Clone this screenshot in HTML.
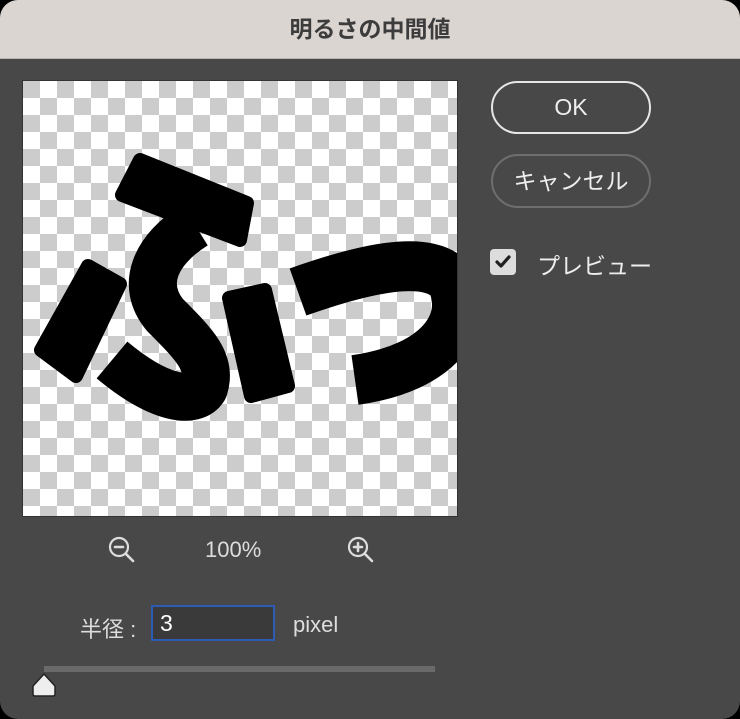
<!DOCTYPE html>
<html><head><meta charset="utf-8"><style>
body{margin:0;width:740px;height:719px;background:#000;overflow:hidden;font-family:"Liberation Sans","Noto Sans CJK JP",sans-serif}
.win{position:absolute;left:0;top:0;width:740px;height:719px;background:#484848;border-radius:18px;overflow:hidden}
.title{position:absolute;left:0;top:0;width:740px;height:58px;background:#dbd5d2;border-bottom:1px solid #b8b3b0;text-align:center;line-height:58px;font-size:23px;font-weight:bold;color:#3c3c3c}
.prev{position:absolute;left:23px;top:81px;width:434px;height:435px;background-color:#fff;
background-image:linear-gradient(45deg,#ccc 25%,transparent 25%,transparent 75%,#ccc 75%),linear-gradient(45deg,#ccc 25%,transparent 25%,transparent 75%,#ccc 75%);
background-size:34px 34px;background-position:17px 0,0 17px;overflow:hidden;outline:1px solid #333}
.btn{position:absolute;left:491px;width:156px;border-radius:27px;text-align:center;color:#eee;font-size:23px;box-sizing:border-box}
.t{position:absolute;color:#ddd;font-size:22px}
</style></head><body>
<div class="win">
<div class="title">明るさの中間値</div>
<div class="prev">
<svg width="434" height="435" viewBox="23 81 434 435" style="position:absolute;left:0;top:0">
<polygon points="140,160 247,203 240,240 122,195" fill="#000" stroke="#000" stroke-width="14" stroke-linejoin="round"/>
<path d="M195,225 C155,250 140,285 165,315 C195,345 212,362 204,388 C194,404 160,400 112,360" fill="none" stroke="#000" stroke-width="48" stroke-linejoin="round"/>
<polygon points="88,266 120,284 76,376 41,350" fill="#000" stroke="#000" stroke-width="14" stroke-linejoin="round"/>
<polygon points="229,298 265,290 288,386 251,396" fill="#000" stroke="#000" stroke-width="14" stroke-linejoin="round"/>
<path d="M298,292 C360,270 430,252 452,282 C470,322 440,368 355,380" fill="none" stroke="#000" stroke-width="50" stroke-linejoin="round"/>
</svg>
</div>
<div class="btn" style="top:81px;height:53px;line-height:49px;border:2px solid #e6e6e6;width:160px">OK</div>
<div class="btn" style="top:154px;height:54px;line-height:50px;border:2px solid #6e6e6e;width:160px">キャンセル</div>
<div style="position:absolute;left:490px;top:249px;width:26px;height:26px;background:#ddd;border-radius:4px">
<svg width="26" height="26"><path d="M7,13 L11,17 L19,8" fill="none" stroke="#222" stroke-width="3.2" stroke-linecap="round" stroke-linejoin="round"/></svg></div>
<div class="t" style="left:537px;top:247px;color:#eee;font-size:23px">プレビュー</div>
<svg style="position:absolute;left:106px;top:535px" width="32" height="32"><circle cx="13" cy="12" r="9" fill="none" stroke="#ddd" stroke-width="2.2"/><path d="M9,12 H17 M20,19 L27,26" stroke="#ddd" stroke-width="2.6" stroke-linecap="round"/></svg>
<div class="t" style="left:205px;top:537px">100%</div>
<svg style="position:absolute;left:345px;top:535px" width="32" height="32"><circle cx="13" cy="12" r="9" fill="none" stroke="#ddd" stroke-width="2.2"/><path d="M9,12 H17 M13,8 V16 M20,19 L27,26" stroke="#ddd" stroke-width="2.6" stroke-linecap="round"/></svg>
<div class="t" style="left:80px;top:612px">半径 :</div>
<div style="position:absolute;left:151px;top:605px;width:124px;height:36px;box-sizing:border-box;border:2px solid #2c5bb8;background:#3a3a3a;color:#fff;font-size:23px;line-height:32px;padding-left:7px">3</div>
<div class="t" style="left:293px;top:612px">pixel</div>
<div style="position:absolute;left:44px;top:666px;width:391px;height:6px;background:#6a6a6a"></div>
<svg style="position:absolute;left:31px;top:671px" width="28" height="28"><path d="M13,3 L24,15 V23 Q24,25 22,25 H4 Q2,25 2,23 V15 Z" fill="#eee" stroke="#222" stroke-width="1.5" stroke-linejoin="round"/></svg>
</div>
</body></html>
